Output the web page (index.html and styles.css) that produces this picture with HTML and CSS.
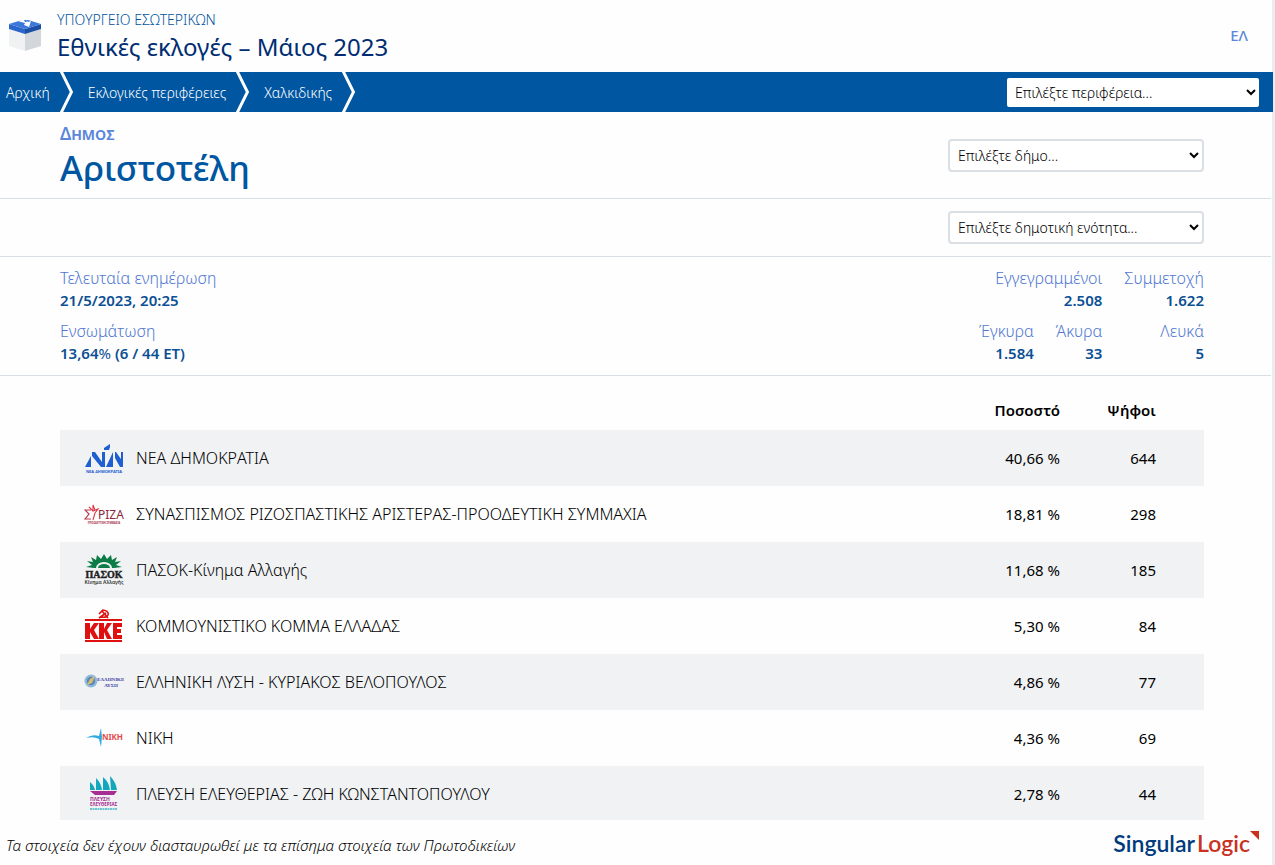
FILE: index.html
```html
<!DOCTYPE html>
<html lang="el">
<head>
<meta charset="utf-8">
<title>Εθνικές εκλογές – Μάιος 2023</title>
<link rel="stylesheet" href="styles.css">
</head>
<body>
<header class="masthead">
  <svg class="masthead-logo" viewBox="0 0 34 34" aria-hidden="true">
    <path d="M1 10L17 15V32L1 27Z" fill="#f0f1f3"/>
    <path d="M33 10L17 15V32L33 27Z" fill="#d3d6db"/>
    <path d="M1 5L17 10V15L1 10Z" fill="#2c66c8"/>
    <path d="M33 5L17 10V15L33 10Z" fill="#1d50a5"/>
    <path d="M1 5L14 1H20L33 5L17 10Z" fill="#3c78dc"/>
    <path d="M10 2L17 0L20 3L23 2L21 8L16 6L17 4L13 3Z" fill="#fff"/>
    <path d="M16 1L18 1L19 3L17 3Z" fill="#3c78dc"/>
  </svg>
  <div class="masthead-titles">
    <div class="ministry">ΥΠΟΥΡΓΕΙΟ ΕΣΩΤΕΡΙΚΩΝ</div>
    <h1 class="election">Εθνικές εκλογές – Μάιος 2023</h1>
  </div>
  <a class="lang" href="#">ΕΛ</a>
</header>
<nav class="crumbs">
  <a class="crumb" href="#">Αρχική</a>
  <svg class="chevron" viewBox="0 0 13 40" aria-hidden="true"><path d="M1 -1L11.500 20L1 41"/></svg>
  <a class="crumb" href="#">Εκλογικές περιφέρειες</a>
  <svg class="chevron" viewBox="0 0 13 40" aria-hidden="true"><path d="M1 -1L11.500 20L1 41"/></svg>
  <a class="crumb" href="#">Χαλκιδικής</a>
  <svg class="chevron" viewBox="0 0 13 40" aria-hidden="true"><path d="M1 -1L11.500 20L1 41"/></svg>
  <select class="picker picker-bar" aria-label="Περιφέρεια"><option>Επιλέξτε περιφέρεια...</option></select>
</nav>
<main class="content">
  <section class="band band-title">
    <div>
      <div class="kind">Δημος</div>
      <h2 class="place">Αριστοτέλη</h2>
    </div>
    <select class="picker" aria-label="Δήμος"><option>Επιλέξτε δήμο...</option></select>
  </section>
  <section class="band band-unit">
    <select class="picker" aria-label="Δημοτική ενότητα"><option>Επιλέξτε δημοτική ενότητα...</option></select>
  </section>
  <section class="band band-stats">
    <dl class="stats">
      <div class="stat"><dt>Τελευταία ενημέρωση</dt><dd>21/5/2023, 20:25</dd></div>
      <div class="stat"><dt>Ενσωμάτωση</dt><dd>13,64<span class="pct">%</span> (6 / 44 ΕΤ)</dd></div>
    </dl>
    <dl class="stats stats-votes">
      <div class="stat stat-wide"><dt>Εγγεγραμμένοι</dt><dd>2.508</dd></div>
      <div class="stat"><dt>Συμμετοχή</dt><dd>1.622</dd></div>
      <div class="stat"><dt>Έγκυρα</dt><dd>1.584</dd></div>
      <div class="stat"><dt>Άκυρα</dt><dd>33</dd></div>
      <div class="stat"><dt>Λευκά</dt><dd>5</dd></div>
    </dl>
  </section>
  <div class="results-wrap">
  <table class="results">
    <thead><tr><th class="col-logo"></th><th></th><th class="num">Ποσοστό</th><th class="num col-votes">Ψήφοι</th></tr></thead>
    <tbody>
      <tr><td class="col-logo"><svg class="party" viewBox="0 0 40 40" aria-hidden="true">
        <g fill="#1f5fd0"><path d="M1 29L7 18V29ZM8 14H11L18 24V14H21V29H17L8 18ZM22 29L29 14V29ZM31 14H32L39 24V14V29H36L31 20ZM20 10L26 6V9L25 12H20Z"/><path d="M37 14H39V29H37Z"/></g>
        <text x="20" y="35" font-size="4" font-weight="700" fill="#1f5fd0" text-anchor="middle">ΝΕΑ ΔΗΜΟΚΡΑΤΙΑ</text></svg></td>
        <td>ΝΕΑ ΔΗΜΟΚΡΑΤΙΑ</td><td class="num">40,66 %</td><td class="num col-votes">644</td></tr>
      <tr><td class="col-logo"><svg class="party" viewBox="0 0 40 40" aria-hidden="true">
        <path d="M7 16H1L5 20L1 25H7" fill="none" stroke="#b8384a" stroke-width="1.200"/>
        <path d="M5 13L9 17L14 15L11 19L9 26M9 17L9 11L11 16" fill="none" stroke="#df3848" stroke-width="1.100"/>
        <text x="14" y="25" font-size="12" font-weight="400" fill="#8c2638">ΡΙΖΑ</text>
        <text x="20" y="30" font-size="2.500" font-weight="700" fill="#a83248" text-anchor="middle">ΠΡΟΟΔΕΥΤΙΚΗ ΣΥΜΜΑΧΙΑ</text></svg></td>
        <td>ΣΥΝΑΣΠΙΣΜΟΣ ΡΙΖΟΣΠΑΣΤΙΚΗΣ ΑΡΙΣΤΕΡΑΣ-ΠΡΟΟΔΕΥΤΙΚΗ ΣΥΜΜΑΧΙΑ</td><td class="num">18,81 %</td><td class="num col-votes">298</td></tr>
      <tr><td class="col-logo"><svg class="party" viewBox="0 0 40 40" aria-hidden="true">
        <path d="M2 17L8 15L3 11L9 12L7 7L12 10L13 5L17 9L20 4L23 9L27 5L28 10L33 7L31 12L37 11L32 15L38 17L30 18H10Z" fill="#0b7c46"/>
        <path d="M12 18A8 6 0 0 1 28 18Z" fill="#f0f2f5"/><path d="M14 18A6 4 0 0 1 26 18Z" fill="#0b7c46"/>
        <text class="serif" x="20" y="28" font-size="10" font-weight="700" fill="#222" stroke="#222" stroke-width=".4" text-anchor="middle">ΠΑΣΟΚ</text>
        <text x="20" y="34" font-size="5" font-weight="600" fill="#333" text-anchor="middle">Κίνημα Αλλαγής</text></svg></td>
        <td>ΠΑΣΟΚ-Κίνημα Αλλαγής</td><td class="num">11,68 %</td><td class="num col-votes">185</td></tr>
      <tr><td class="col-logo"><svg class="party" viewBox="0 0 40 40" aria-hidden="true">
        <path d="M1 13H38V15H1ZM1 34H38V36H1Z" fill="#e01010"/>
        <path d="M18 4C27 4 26 13 17 11M15 12L22 7M15 8L18 5L24 12" fill="none" stroke="#e01010" stroke-width="1.600"/>
        <g fill="#e01010"><path d="M1 17H6V23L10 17H15L10 24L15 33H10L6 26V33H1ZM15 17H20V23L23 17H28L23 24L28 33H23L20 26V33H15ZM29 17H38V21H33V23H37V27H33V29H38V33H29Z"/></g></svg></td>
        <td>ΚΟΜΜΟΥΝΙΣΤΙΚΟ ΚΟΜΜΑ ΕΛΛΑΔΑΣ</td><td class="num">5,30 %</td><td class="num col-votes">84</td></tr>
      <tr><td class="col-logo"><svg class="party" viewBox="0 0 40 40" aria-hidden="true">
        <circle cx="7" cy="19" r="6.500" fill="#8fb9dc"/><circle cx="7" cy="19" r="4.200" fill="#5c88ae"/><path d="M11 14L8 21L3 23L6 17Z" fill="#d8be75"/>
        <text class="serif" x="27" y="19" font-size="5" font-weight="700" fill="#3d43a5" text-anchor="middle">ΕΛΛΗΝΙΚΗ</text>
        <text class="serif" x="27" y="25" font-size="5" font-weight="700" fill="#3d43a5" text-anchor="middle">ΛΥΣΗ</text></svg></td>
        <td>ΕΛΛΗΝΙΚΗ ΛΥΣΗ - ΚΥΡΙΑΚΟΣ ΒΕΛΟΠΟΥΛΟΣ</td><td class="num">4,86 %</td><td class="num col-votes">77</td></tr>
      <tr><td class="col-logo"><svg class="party" viewBox="0 0 40 40" aria-hidden="true">
        <path d="M2 20Q8 16 15 18L17 10L18 19L17 29L15 21Q10 18 2 20Z" fill="#32a9e2"/>
        <text x="18" y="22" font-size="8" font-weight="700" fill="#e34b4d">ΝΙΚΗ</text></svg></td>
        <td>ΝΙΚΗ</td><td class="num">4,36 %</td><td class="num col-votes">69</td></tr>
      <tr><td class="col-logo"><svg class="party" viewBox="0 0 40 40" aria-hidden="true">
        <path d="M6 8Q10 11 11 16H6ZM12 4Q17 9 18 16H12ZM19 3Q25 8 26 16H19ZM26 2Q32 8 33 16H27Z" fill="#12a7bc"/><path d="M6 17L33 17L30 21H11Z" fill="#a62d91"/>
        <text x="6" y="27" font-size="5" font-weight="700" fill="#a62d91">ΠΛΕΥΣΗ</text>
        <text x="6" y="32" font-size="4.500" font-weight="700" fill="#a62d91">ΕΛΕΥΘΕΡΙΑΣ</text>
        <path d="M6 35H33" stroke="#43b4c4" stroke-width="1.500" stroke-dasharray="2 .5"/></svg></td>
        <td>ΠΛΕΥΣΗ ΕΛΕΥΘΕΡΙΑΣ - ΖΩΗ ΚΩΝΣΤΑΝΤΟΠΟΥΛΟΥ</td><td class="num">2,78 %</td><td class="num col-votes">44</td></tr>
    </tbody>
  </table>
  </div>
</main>
<footer class="foot">
  <p class="note">Τα στοιχεία δεν έχουν διασταυρωθεί με τα επίσημα στοιχεία των Πρωτοδικείων</p>
  <a class="vendor" href="#"><span>Singular</span><span class="vendor-logic">Logic</span><svg class="vendor-mark" viewBox="0 0 9 9" aria-hidden="true"><path d="M0 0H9V9Z" fill="#c9321e"/></svg></a>
</footer>
</body>
</html>
```
FILE: styles.css
```css
* { box-sizing: border-box; }
body {
  margin: 0;
  height: 100vh;
  display: flex;
  flex-direction: column;
  overflow: hidden;
  padding-right: 2px;
  font-family: "Noto Sans", "Open Sans", sans-serif;
  font-size: 16px;
  font-weight: 300;
  color: #000;
  background: linear-gradient(to left, #e9ecf0 3px, #fefefe 3px);
}
a { text-decoration: none; color: inherit; }
h1, h2, p, dl, dd { margin: 0; }

.masthead {
  flex: none;
  display: flex;
  align-items: center;
  height: 72px;
  padding: 0 25px 0 8px;
}
.masthead-logo { width: 34px; height: 34px; margin-right: 15px; }
.masthead-titles { flex: 1; padding-top: 1px; }
.ministry { font-size: 14px; line-height: 20px; color: #0055a0; }
.election { font-size: 24px; line-height: 34px; font-weight: 450; color: #002d72; }
.lang { font-size: 15px; line-height: 20px; padding-bottom: 2px; font-weight: 500; color: #5b87da; }

.crumbs {
  flex: none;
  display: flex;
  align-items: center;
  height: 40px;
  padding: 0 14px 0 6px;
  background: #0056a1;
  color: #fff;
}
.crumb { font-size: 14px; font-weight: 350; }
.chevron { width: 13px; height: 40px; margin: 0 15px 0 10px; }
.chevron path { fill: none; stroke: #fff; stroke-width: 3; }
.picker {
  width: 256px;
  height: 33px;
  margin-left: auto;
  padding: 0 4px;
  border: 2px solid #dadfe6;
  border-radius: 4px;
  background-color: #fff;
  color: #000;
  font-family: inherit;
  font-size: 14px;
  font-weight: 300;
}
.picker-bar { width: 252px; height: 29px; border: 0; border-radius: 2px; }

.content { flex: 1; min-height: 0; overflow: hidden; margin-right: 2px; }
.band {
  display: flex;
  align-items: center;
  padding: 12px 67px 12px 60px;
  border-bottom: 1px solid #dadfe6;
}
.band-title { padding-top: 10px; padding-bottom: 9px; }
.kind { font-size: 17px; line-height: 24px; font-weight: 600; font-variant: small-caps; color: #5b87da; }
.place { font-size: 35px; line-height: 43px; font-weight: 500; color: #0056a1; }
.band-stats { justify-content: space-between; align-items: flex-start; padding-top: 11px; padding-bottom: 10px; }
.stats { display: grid; row-gap: 9px; }
.stats-votes { grid-template-columns: auto auto auto; column-gap: 22px; text-align: right; }
.stat-wide { grid-column: span 2; }
.stat dt { font-size: 16px; line-height: 20px; color: #5078d2; }
.stat dd { font-size: 15px; line-height: 24px; font-weight: 600; color: #0b4f94; }
.pct { font-weight: 400; }

.results-wrap { padding: 14px 67px 0 60px; }
.results { width: 100%; border-collapse: collapse; }
.results th { height: 40px; padding: 0; font-size: 15px; font-weight: 600; }
.results td { height: 56px; padding: 0; }
.results tbody tr:nth-child(odd) { background: #f0f2f4; }
.results .col-logo { width: 76px; padding-left: 24px; }
.results .num { width: 144px; text-align: right; }
.results td.num { font-size: 15px; font-weight: 400; }
.results .col-votes { width: 144px; padding-right: 48px; }
.party { display: block; width: 40px; height: 40px; }
.serif { font-family: "Liberation Serif", serif; }

.foot {
  flex: none;
  display: flex;
  align-items: center;
  justify-content: space-between;
  height: 45px;
  padding: 0 14px 0 6px;
}
.note { font-size: 15px; font-style: italic; padding-top: 5px; }
.vendor { display: flex; align-items: center; font-family: Lato, sans-serif; font-size: 23px; font-weight: 600; color: #003c7d; }
.vendor-logic { margin-left: 2px; color: #c9321e; }
.vendor-mark { width: 9px; height: 9px; align-self: flex-start; margin-top: 2px; }
```
